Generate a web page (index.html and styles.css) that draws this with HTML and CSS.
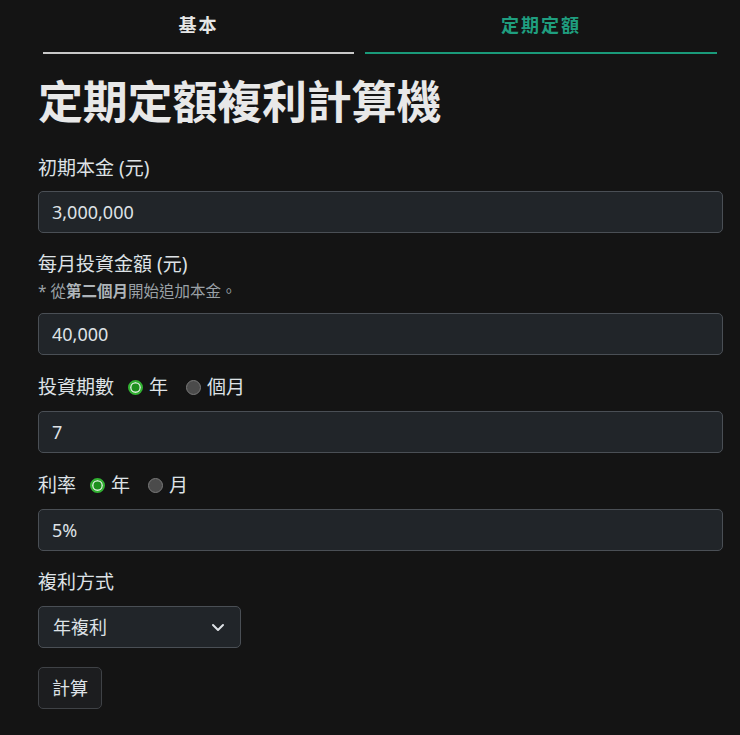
FILE: index.html
```html
<!DOCTYPE html>
<html lang="zh-Hant">
<head>
<meta charset="utf-8">
<title>定期定額複利計算機</title>
<link rel="stylesheet" href="styles.css">
</head>
<body>
<div class="page">
  <nav class="tabs">
    <a class="tab">基本</a>
    <a class="tab active">定期定額</a>
  </nav>
  <h1 class="title">定期定額複利計算機</h1>
  <form class="form">
    <div class="field">
      <label class="label">初期本金 (元)</label>
      <input class="control" type="text" value="3,000,000">
    </div>
    <div class="field">
      <label class="label label-tight">每月投資金額 (元)</label>
      <div class="hint">* 從<b>第二個月</b>開始追加本金。</div>
      <input class="control" type="text" value="40,000">
    </div>
    <div class="field">
      <div class="label radio-row">
        <span>投資期數</span>
        <span class="radio checked"></span><span class="opt">年</span>
        <span class="radio"></span><span class="opt">個月</span>
      </div>
      <input class="control" type="text" value="7">
    </div>
    <div class="field">
      <div class="label radio-row">
        <span>利率</span>
        <span class="radio checked"></span><span class="opt">年</span>
        <span class="radio"></span><span class="opt">月</span>
      </div>
      <input class="control" type="text" value="5%">
    </div>
    <div class="field field-last">
      <label class="label label-select">複利方式</label>
      <div class="select">
        <span>年複利</span>
        <svg class="chev" width="14" height="10" viewBox="0 0 14 10"><path d="M2 3 L7 8 L12 3" fill="none" stroke="#dee2e6" stroke-width="2" stroke-linecap="round" stroke-linejoin="round"/></svg>
      </div>
    </div>
    <div class="actions">
      <span class="btn">計算</span>
    </div>
  </form>
</div>
</body>
</html>
```

FILE: styles.css
```css
* { box-sizing: border-box; }
html, body {
  margin: 0;
  padding: 0;
  background: #141414;
}
body {
  font-family: "Noto Sans", "Noto Sans CJK TC", sans-serif;
  color: #dee2e6;
  font-size: 18px;
  line-height: 1.5;
}
.page {
  padding: 0 17px 0 38px;
}
.tabs {
  display: grid;
  grid-template-columns: 311fr 352fr;
  column-gap: 11px;
  margin: 0 6px 0 5px;
}
.tab {
  display: block;
  text-align: center;
  font-weight: 700;
  font-size: 18px;
  letter-spacing: 2px;
  color: #e6e6e6;
  padding: 11px 0 12px;
  line-height: 29px;
  border-bottom: 2px solid #c8c8c8;
}
.tab.active {
  color: #1f9e7f;
  border-bottom-color: #1a9a7a;
}
.title {
  margin: 21px 0 26px;
  font-size: 45px;
  line-height: 54px;
  font-weight: 700;
  color: #e8e8e8;
  letter-spacing: -0.2px;
}
.form {
  display: flex;
  flex-direction: column;
}
.field {
  display: flex;
  flex-direction: column;
  margin-bottom: 18px;
}
.field-last { margin-bottom: 19px; }
.label {
  display: block;
  font-size: 19px;
  line-height: 27px;
  margin-bottom: 9px;
  color: #dee2e6;
}
.label-tight { margin-bottom: 2px; }
.label-select { margin-bottom: 10px; }
.hint {
  font-size: 15.5px;
  line-height: 23px;
  color: #9ba1a6;
  margin-bottom: 10px;
}
.hint b { font-weight: 700; color: #aeb4b9; }
.radio-row {
  display: flex;
  align-items: center;
  height: 29px;
}
.radio {
  width: 15px;
  height: 15px;
  border-radius: 50%;
  background: #4b4b4b;
  border: 1px solid #7a7a7a;
  margin: 0 6px 0 14px;
}
.radio.checked {
  background: #1d8f1d;
  border: 2px solid #32b232;
  box-shadow: inset 0 0 0 1.5px #d7ecd7;
}
.opt { margin-right: 4px; }
.control {
  display: block;
  width: 100%;
  height: 42px;
  padding: 6px 13px;
  font: inherit;
  color: #dee2e6;
  background: #212529;
  border: 1px solid #4a4f55;
  border-radius: 5px;
  outline: none;
}
.select {
  display: flex;
  align-items: center;
  justify-content: space-between;
  width: 203px;
  height: 42px;
  padding: 0 14px 0 14px;
  background: #212529;
  border: 1px solid #4a4f55;
  border-radius: 5px;
}
.chev { display: block; margin-right: 1px; }
.actions { display: flex; }
.btn {
  display: inline-block;
  height: 42px;
  line-height: 40px;
  padding: 0 13px;
  border: 1px solid #3f4246;
  border-radius: 5px;
  background: #1c1d1f;
  color: #dee2e6;
}
```
